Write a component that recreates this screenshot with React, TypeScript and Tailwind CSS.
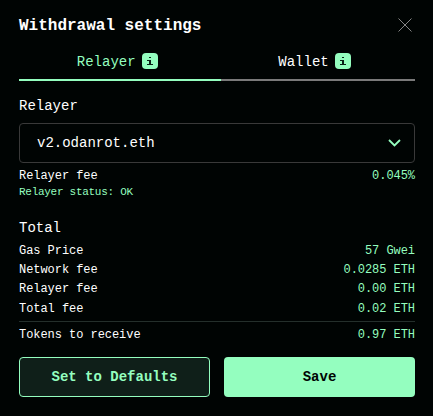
import React from "react";

type RowProps = { label: string; value: string; className: string };

function Row({ label, value, className }: RowProps) {
  return (
    <div className={`flex items-center justify-between text-[12px] tracking-[-0.05px] ${className}`}>
      <span className="text-white">{label}</span>
      <span className="text-[#94febf]">{value}</span>
    </div>
  );
}

function InfoBadge() {
  return (
    <span className="mb-[2px] flex h-4 w-4 items-center justify-center rounded-[4px] bg-[#94febf]">
      <svg width="16" height="16" viewBox="0 0 16 16" fill="#0a2016" shapeRendering="crispEdges">
        <rect x="7" y="4" width="2" height="1" />
        <rect x="5" y="7" width="4" height="1" />
        <rect x="7" y="8" width="2" height="3" />
        <rect x="5" y="11" width="6" height="1" />
      </svg>
    </span>
  );
}

export default function App() {
  return (
    <div className="h-[416px] w-[433px] bg-[#000403] pt-[15px] pr-[18px] pl-[19px] font-['Liberation_Mono',monospace] text-white">
      <header className="flex h-5 items-center justify-between">
        <h1 className="pt-[2px] text-[16px] leading-5 font-bold">Withdrawal settings</h1>
        <button className="pr-[3px]" aria-label="Close">
          <svg width="14" height="14" viewBox="0 0 14 14" className="block" fill="none" stroke="#858585" strokeWidth="1">
            <path d="M0.5 0.5L13.5 13.5M13.5 0.5L0.5 13.5" />
          </svg>
        </button>
      </header>

      <nav className="mt-[11px] flex h-[35px] text-[14px]">
        <div className="flex w-[202px] items-center justify-center gap-[6.6px] border-b-2 border-[#94febf] pr-[5px] pb-[1px] text-[#94febf]">
          Relayer
          <InfoBadge />
        </div>
        <div className="flex flex-1 items-center justify-center gap-[6px] border-b-2 border-[#7a7a7a] pr-[7px] pb-[1px]">
          Wallet
          <InfoBadge />
        </div>
      </nav>

      <div className="mt-[15px] h-[21px] text-[14px] leading-[21px]">Relayer</div>
      <div className="mt-[6px] flex h-10 items-center justify-between rounded-[4px] border border-[#393939] pr-[13px] pl-[17px] text-[14px]">
        <span>v2.odanrot.eth</span>
        <svg width="13" height="9" viewBox="0 0 13 9" fill="none" stroke="#94febf" strokeWidth="1.8">
          <path d="M1 1L6.5 6.5L12 1" />
        </svg>
      </div>
      <Row label="Relayer fee" value="0.045%" className="mt-[4px] h-[18px]" />
      <div className="-mt-px h-4 text-[11px] leading-4 tracking-[-0.28px] text-[#94febf]">Relayer status: OK</div>

      <div className="mt-[18px] h-[21px] text-[14px] leading-[21px]">Total</div>
      <Row label="Gas Price" value="57 Gwei" className="mt-[2px] h-[19px]" />
      <Row label="Network fee" value="0.0285 ETH" className="h-[19px]" />
      <Row label="Relayer fee" value="0.00 ETH" className="h-[19px]" />
      <Row label="Total fee" value="0.02 ETH" className="mt-px h-[20px]" />
      <Row label="Tokens to receive" value="0.97 ETH" className="mt-[2px] h-[26px] border-t border-[#242f2b]" />

      <footer className="mt-[10px] grid h-10 grid-cols-2 gap-[14px] text-[14px] font-bold">
        <button className="rounded-[4px] border border-[#94febf] bg-[#0f1f19] text-[#94febf]">
          Set to Defaults
        </button>
        <button className="rounded-[4px] bg-[#94febf] text-[#000403]">Save</button>
      </footer>
    </div>
  );
}
